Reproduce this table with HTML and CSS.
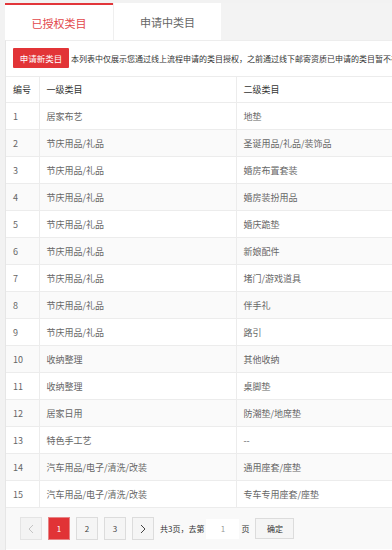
FILE: index.html
```html
<!DOCTYPE html>
<html lang="zh-CN">
<head>
<meta charset="utf-8">
<title>已授权类目</title>
<link rel="stylesheet" href="styles.css">
</head>
<body>
<div class="tabs">
  <div class="tab active">已授权类目</div>
  <div class="tab">申请中类目</div>
</div>
<div class="panel">
  <div class="toolbar">
    <button class="btn-apply">申请新类目</button>
    <span class="notice">本列表中仅展示您通过线上流程申请的类目授权，之前通过线下邮寄资质已申请的类目暂不在此展示</span>
  </div>
  <table class="grid">
    <colgroup>
      <col class="c-no"><col class="c-l1"><col class="c-l2">
    </colgroup>
    <thead>
      <tr><th>编号</th><th>一级类目</th><th>二级类目</th></tr>
    </thead>
    <tbody>
      <tr><td>1</td><td>居家布艺</td><td>地垫</td></tr>
      <tr><td>2</td><td>节庆用品/礼品</td><td>圣诞用品/礼品/装饰品</td></tr>
      <tr><td>3</td><td>节庆用品/礼品</td><td>婚房布置套装</td></tr>
      <tr><td>4</td><td>节庆用品/礼品</td><td>婚房装扮用品</td></tr>
      <tr><td>5</td><td>节庆用品/礼品</td><td>婚庆跪垫</td></tr>
      <tr><td>6</td><td>节庆用品/礼品</td><td>新娘配件</td></tr>
      <tr><td>7</td><td>节庆用品/礼品</td><td>堵门/游戏道具</td></tr>
      <tr><td>8</td><td>节庆用品/礼品</td><td>伴手礼</td></tr>
      <tr><td>9</td><td>节庆用品/礼品</td><td>路引</td></tr>
      <tr><td>10</td><td>收纳整理</td><td>其他收纳</td></tr>
      <tr><td>11</td><td>收纳整理</td><td>桌脚垫</td></tr>
      <tr><td>12</td><td>居家日用</td><td>防潮垫/地席垫</td></tr>
      <tr><td>13</td><td>特色手工艺</td><td>--</td></tr>
      <tr><td>14</td><td>汽车用品/电子/清洗/改装</td><td>通用座套/座垫</td></tr>
      <tr><td>15</td><td>汽车用品/电子/清洗/改装</td><td>专车专用座套/座垫</td></tr>
    </tbody>
  </table>
  <div class="pager">
    <span class="pg disabled">
      <svg width="6" height="10" viewBox="0 0 6 10"><path d="M5 1 L1 5 L5 9" fill="none" stroke="currentColor" stroke-width="1"/></svg>
    </span>
    <span class="pg current">1</span>
    <span class="pg">2</span>
    <span class="pg">3</span>
    <span class="pg">
      <svg width="6" height="10" viewBox="0 0 6 10"><path d="M1 1 L5 5 L1 9" fill="none" stroke="currentColor" stroke-width="1"/></svg>
    </span>
    <span class="pg-text">共3页，去第</span>
    <span class="pg-input">1</span>
    <span class="pg-text">页</span>
    <span class="pg-ok">确定</span>
  </div>
</div>
</body>
</html>
```

FILE: styles.css
```css
html, body {
  margin: 0;
  padding: 0;
  overflow: hidden;
}
body {
  background: #f2f2f2;
  font-family: "Noto Sans CJK SC", "Noto Sans", sans-serif;
  color: #333;
  width: 392px;
  height: 550px;
}
.tabs {
  display: flex;
  margin: 3px 0 0 5px;
  height: 37px;
  background: #f3f3f3;
}
.tab {
  width: 108px;
  height: 37px;
  box-sizing: border-box;
  background: #fff;
  color: #666;
  font-size: 11px;
  display: flex;
  align-items: center;
  justify-content: center;
  padding-top: 1px;
  border-left: 1px solid #efefef;
}
.tab.active {
  border-left: none;
  border-top: 2px solid #e2363a;
  color: #e2474b;
  padding-top: 0;
}
.panel {
  margin-left: 5px;
  background: #fff;
  border-left: 1px solid #e6e6e6;
  border-top: 1px solid #ededed;
  height: 520px;
  width: 600px;
}
.toolbar {
  display: flex;
  align-items: center;
  padding: 7px 0 0 7px;
  height: 20px;
  white-space: nowrap;
}
.btn-apply {
  width: 56px;
  height: 20px;
  border: none;
  border-radius: 1px;
  background: #e23437;
  color: #fff;
  font-family: inherit;
  font-size: 8.5px;
  padding: 0;
  margin: 0 2px 0 0;
}
.notice {
  font-size: 8px;
  color: #333;
}
.grid {
  margin-top: 8px;
  border-collapse: collapse;
  width: 600px;
  table-layout: fixed;
  font-size: 9px;
}
.c-no { width: 33px; }
.c-l1 { width: 197px; }
.grid th, .grid td {
  border: 1px solid #ececec;
  text-align: left;
  padding: 0 0 0 7px;
  white-space: nowrap;
  overflow: hidden;
}
.grid th {
  height: 25px;
  color: #333;
  font-weight: normal;
  background: #fff;
}
.grid td {
  height: 26px;
  color: #666;
}
.grid th:first-child, .grid td:first-child {
  border-left: none;
}
.grid tbody tr:nth-child(even) td {
  background: #fafafa;
}
.pager {
  display: flex;
  align-items: center;
  background: #f9f9f9;
  height: 41px;
  padding-left: 14px;
  font-size: 8px;
  color: #333;
}
.pg {
  width: 22px;
  height: 23px;
  box-sizing: border-box;
  border: 1px solid #dcdcdc;
  background: #f5f5f5;
  display: flex;
  align-items: center;
  justify-content: center;
  margin-right: 6px;
  color: #444;
}
.pg.disabled {
  color: #c4c4c4;
  border-color: #e4e4e4;
  background: #f3f3f3;
}
.pg.current {
  background: #e13336;
  border-color: #e78486;
  color: #fff;
}
.pg-text {
  margin: 0 1px 0 0;
}
.pg-input {
  width: 33px;
  height: 20px;
  background: #fff;
  display: flex;
  align-items: center;
  justify-content: center;
  color: #999;
  margin: 0 2px 0 1px;
}
.pg-ok {
  margin-left: 5px;
  width: 39px;
  height: 21px;
  box-sizing: border-box;
  border: 1px solid #dcdcdc;
  background: #f5f5f5;
  display: flex;
  align-items: center;
  justify-content: center;
  color: #333;
}
```
